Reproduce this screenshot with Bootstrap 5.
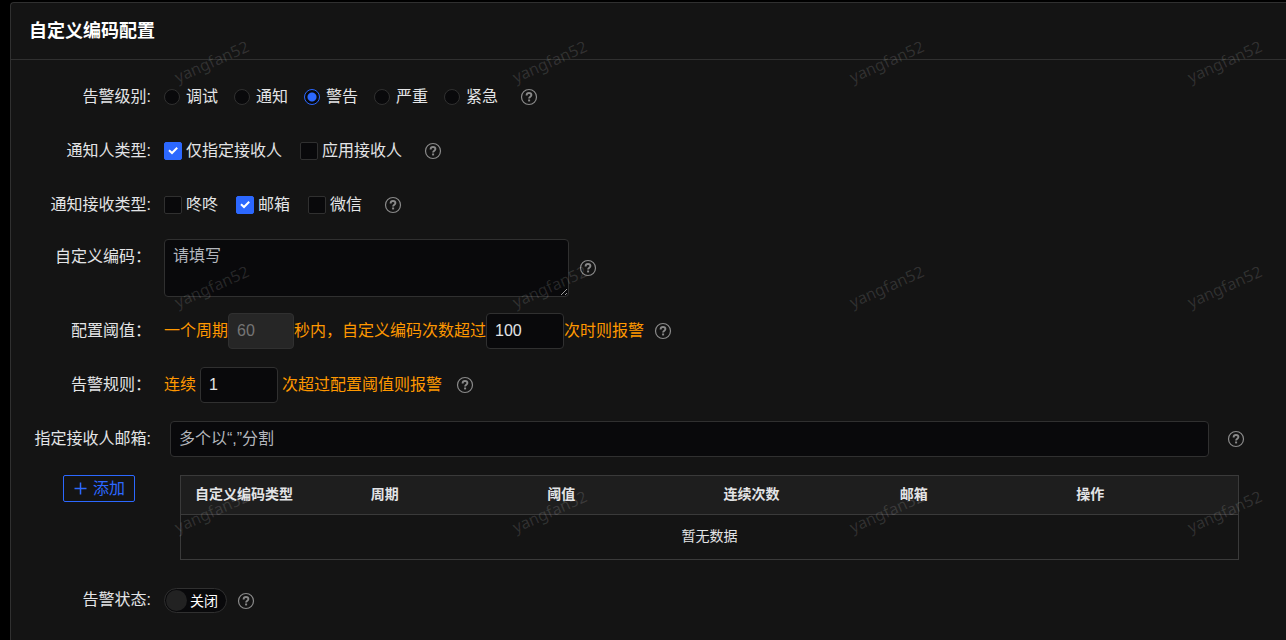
<!DOCTYPE html>
<html lang="zh-CN" data-bs-theme="dark">
<head>
<meta charset="utf-8">
<meta name="viewport" content="width=device-width, initial-scale=1">
<title>自定义编码配置</title>
<link href="https://cdn.jsdelivr.net/npm/bootstrap@5.3.0/dist/css/bootstrap.min.css" rel="stylesheet">
<style>
  :root { color-scheme: dark; }
  body { background: #000; color: #e3e4e6; font-family: "Liberation Sans", "Noto Sans CJK SC", sans-serif; font-size: 16px; line-height: 24px; overflow-x: hidden; }
  .panel { background: #141414; border: 1px solid #303030; border-width: 1px 0 0 1px; border-radius: 4px 0 0 0; min-height: calc(100vh - 2px); margin: 2px 0 0 10px; }
  .panel-head { border-bottom: 1px solid #303030; padding: 16px 18px; }
  .panel-head h1 { font-size: 18px; line-height: 24px; font-weight: 700; color: #fff; }
  .panel-form { padding-top: 19px; }
  .form-line { display: flex; margin-bottom: 18px; min-height: 36px; }
  .line-label { width: 140px; flex: none; text-align: right; line-height: 36px; margin-right: 13px; white-space: nowrap; }
  .line-body { display: flex; align-items: center; flex: 1; white-space: nowrap; min-width: 0; }
  .choice { display: flex; align-items: center; }
  .choice .form-check-input { margin: 0; background-color: #09090b; border-color: #303030; flex: none; box-shadow: none; }
  .choice .form-check-input[type=radio] { width: 16px; height: 16px; margin-right: 6px; }
  .choice .form-check-input[type=checkbox] { width: 18px; height: 18px; border-radius: 2px; margin-right: 4px; }
  .choice .form-check-input[type=radio]:checked { border-color: #2c68ff; background-image: radial-gradient(circle, #2c68ff 0 4px, transparent 5px); background-size: 100% 100%; }
  .choice .form-check-input[type=checkbox]:checked { background-color: #2c68ff; border-color: #2c68ff; background-image: url("data:image/svg+xml,%3Csvg xmlns='http://www.w3.org/2000/svg' viewBox='0 0 16 16'%3E%3Cpath d='M4 7.2 7 10 12.2 4.8' fill='none' stroke='white' stroke-width='2'/%3E%3C/svg%3E"); background-size: 16px 16px; background-position: center; }
  .radios { gap: 16px; }
  .checks { gap: 18px; }
  .help { width: 18px; height: 18px; color: #8a8a8a; flex: none; margin-left: 10px; }
  .help-far { margin-left: 22px; }
  .field { background: #09090b !important; border: 1px solid #303030; border-radius: 4px; color: #e3e4e6; padding: 5px 8px; font-size: 16px; line-height: 24px; height: 36px; box-shadow: none; flex: none; }
  .field::placeholder { color: #b4b7bd; opacity: 1; }
  .field:disabled { background: #262626 !important; color: #757575; opacity: 1; }
  textarea.field { width: 405px; height: 58px; min-height: 58px; padding: 4px 8px; resize: both; }
  .w-num { width: 78px; }
  .w-period { width: 66px; }
  .hint { color: #ff9800; }
  .mail-field { flex: 1; margin-left: 6px; min-width: 0; }
  .mail-line { padding-right: 41px; }
  .mail-line .help { margin-left: 18px; }
  .btn-add { flex: none; border: 1px solid #2c68ff; color: #2c68ff; border-radius: 2px; width: 72px; height: 27px; padding: 0; line-height: 24px; font-size: 16px; display: flex; align-items: center; justify-content: center; gap: 5px; background: none; }
  .add-line { padding: 0 47px 0 52px; margin-bottom: 28px; gap: 45px; align-items: flex-start; }
  .rules { margin: 0; table-layout: fixed; font-size: 14px; line-height: 20px; border: 1px solid #3a3a3a; --bs-table-bg: #141414; --bs-table-color: #e3e4e6; border-collapse: collapse; }
  .rules th { background: #1e1e1e; padding: 8px 14px 10px; border-bottom: 1px solid #3a3a3a; }
  .rules td { padding: 11px 14px 13px; border: 0; text-align: center; }
  .toggle { display: flex; align-items: center; gap: 3px; width: 63px; height: 25px; border: 1px solid #303030; border-radius: 13px; background: #09090b; color: #fff; font-size: 14px; padding-left: 1px; }
  .toggle .form-check-input { width: 21px; height: 21px; margin: 0; border: 0; border-radius: 50%; background: #222; }
  .state-line { min-height: 24px; }
  .state-line .line-label { line-height: 24px; }
  .stamp { position: absolute; inset: 0; width: 100%; height: 100%; pointer-events: none; z-index: 5; overflow: hidden; fill: #fff; fill-opacity: .13; font: 16px "Noto Sans", sans-serif; text-anchor: middle; }
</style>
</head>
<body class="position-relative">
<svg class="d-none" aria-hidden="true">
  <symbol id="q" viewBox="0 0 18 18">
    <circle cx="9" cy="9" r="7.5" fill="none" stroke="currentColor" stroke-width="1.2"/>
    <path d="M6.6 7.4C6.6 5.8 7.6 5 9 5s2.4.8 2.4 2.1c0 1.6-2.3 1.7-2.3 3.5" fill="none" stroke="currentColor" stroke-width="1.9"/>
    <rect x="8.1" y="11.5" width="2" height="1.9" fill="currentColor"/>
  </symbol>
</svg>

<main class="panel">
  <header class="panel-head"><h1 class="m-0">自定义编码配置</h1></header>
  <form class="panel-form">
    <div class="form-line" role="radiogroup" aria-labelledby="l-level">
      <span class="line-label" id="l-level">告警级别:</span>
      <div class="line-body">
        <div class="d-flex radios">
          <label class="choice"><input class="form-check-input" type="radio" name="level">调试</label>
          <label class="choice"><input class="form-check-input" type="radio" name="level">通知</label>
          <label class="choice"><input class="form-check-input" type="radio" name="level" checked>警告</label>
          <label class="choice"><input class="form-check-input" type="radio" name="level">严重</label>
          <label class="choice"><input class="form-check-input" type="radio" name="level">紧急</label>
        </div>
        <svg class="help help-far"><use href="#q"/></svg>
      </div>
    </div>

    <div class="form-line" role="group" aria-labelledby="l-who">
      <span class="line-label" id="l-who">通知人类型:</span>
      <div class="line-body">
        <div class="d-flex checks">
          <label class="choice"><input class="form-check-input" type="checkbox" checked>仅指定接收人</label>
          <label class="choice"><input class="form-check-input" type="checkbox">应用接收人</label>
        </div>
        <svg class="help help-far"><use href="#q"/></svg>
      </div>
    </div>

    <div class="form-line mb-3" role="group" aria-labelledby="l-via">
      <span class="line-label" id="l-via">通知接收类型:</span>
      <div class="line-body">
        <div class="d-flex checks">
          <label class="choice"><input class="form-check-input" type="checkbox">咚咚</label>
          <label class="choice"><input class="form-check-input" type="checkbox" checked>邮箱</label>
          <label class="choice"><input class="form-check-input" type="checkbox">微信</label>
        </div>
        <svg class="help help-far"><use href="#q"/></svg>
      </div>
    </div>

    <div class="form-line mb-3">
      <label class="line-label" for="code">自定义编码：</label>
      <div class="line-body">
        <textarea class="form-control field" id="code" placeholder="请填写"></textarea>
        <svg class="help"><use href="#q"/></svg>
      </div>
    </div>

    <div class="form-line">
      <label class="line-label" for="times">配置阈值：</label>
      <div class="line-body hint">
        <span>一个周期</span><input class="form-control field w-period" value="60" aria-label="周期" disabled><span>秒内，自定义编码次数超过</span><input class="form-control field w-num" id="times" value="100"><span>次时则报警</span>
        <svg class="help"><use href="#q"/></svg>
      </div>
    </div>

    <div class="form-line">
      <label class="line-label" for="runs">告警规则：</label>
      <div class="line-body hint gap-1">
        <span>连续</span><input class="form-control field w-num" id="runs" value="1"><span>次超过配置阈值则报警</span>
        <svg class="help"><use href="#q"/></svg>
      </div>
    </div>

    <div class="form-line mail-line">
      <label class="line-label" for="mail">指定接收人邮箱:</label>
      <div class="line-body">
        <input class="form-control field mail-field" id="mail" placeholder="多个以“,”分割">
        <svg class="help"><use href="#q"/></svg>
      </div>
    </div>

    <div class="form-line add-line">
      <button class="btn btn-add" type="button">
        <svg width="15" height="15" viewBox="0 0 15 15" aria-hidden="true"><path d="M7.5 1.5v12M1.5 7.5h12" stroke="currentColor" stroke-width="1.5"/></svg>添加
      </button>
      <div class="flex-fill">
        <table class="table rules">
          <thead><tr><th>自定义编码类型</th><th>周期</th><th>阈值</th><th>连续次数</th><th>邮箱</th><th>操作</th></tr></thead>
          <tbody><tr><td colspan="6">暂无数据</td></tr></tbody>
        </table>
      </div>
    </div>

    <div class="form-line state-line mb-0">
      <label class="line-label" for="state">告警状态:</label>
      <div class="line-body">
        <label class="toggle"><input class="form-check-input" type="checkbox" role="switch" id="state">关闭</label>
        <svg class="help"><use href="#q"/></svg>
      </div>
    </div>
  </form>
</main>

<svg class="stamp" aria-hidden="true">
  <text transform="translate(214 67) rotate(-24)">yangfan52</text>
  <text transform="translate(552 67) rotate(-24)">yangfan52</text>
  <text transform="translate(889 67) rotate(-24)">yangfan52</text>
  <text transform="translate(1227 67) rotate(-24)">yangfan52</text>
  <text transform="translate(214 292) rotate(-24)">yangfan52</text>
  <text transform="translate(552 292) rotate(-24)">yangfan52</text>
  <text transform="translate(889 292) rotate(-24)">yangfan52</text>
  <text transform="translate(1227 292) rotate(-24)">yangfan52</text>
  <text transform="translate(214 517) rotate(-24)">yangfan52</text>
  <text transform="translate(552 517) rotate(-24)">yangfan52</text>
  <text transform="translate(889 517) rotate(-24)">yangfan52</text>
  <text transform="translate(1227 517) rotate(-24)">yangfan52</text>
</svg>
<script src="https://cdn.jsdelivr.net/npm/bootstrap@5.3.0/dist/js/bootstrap.bundle.min.js"></script>
</body>
</html>
